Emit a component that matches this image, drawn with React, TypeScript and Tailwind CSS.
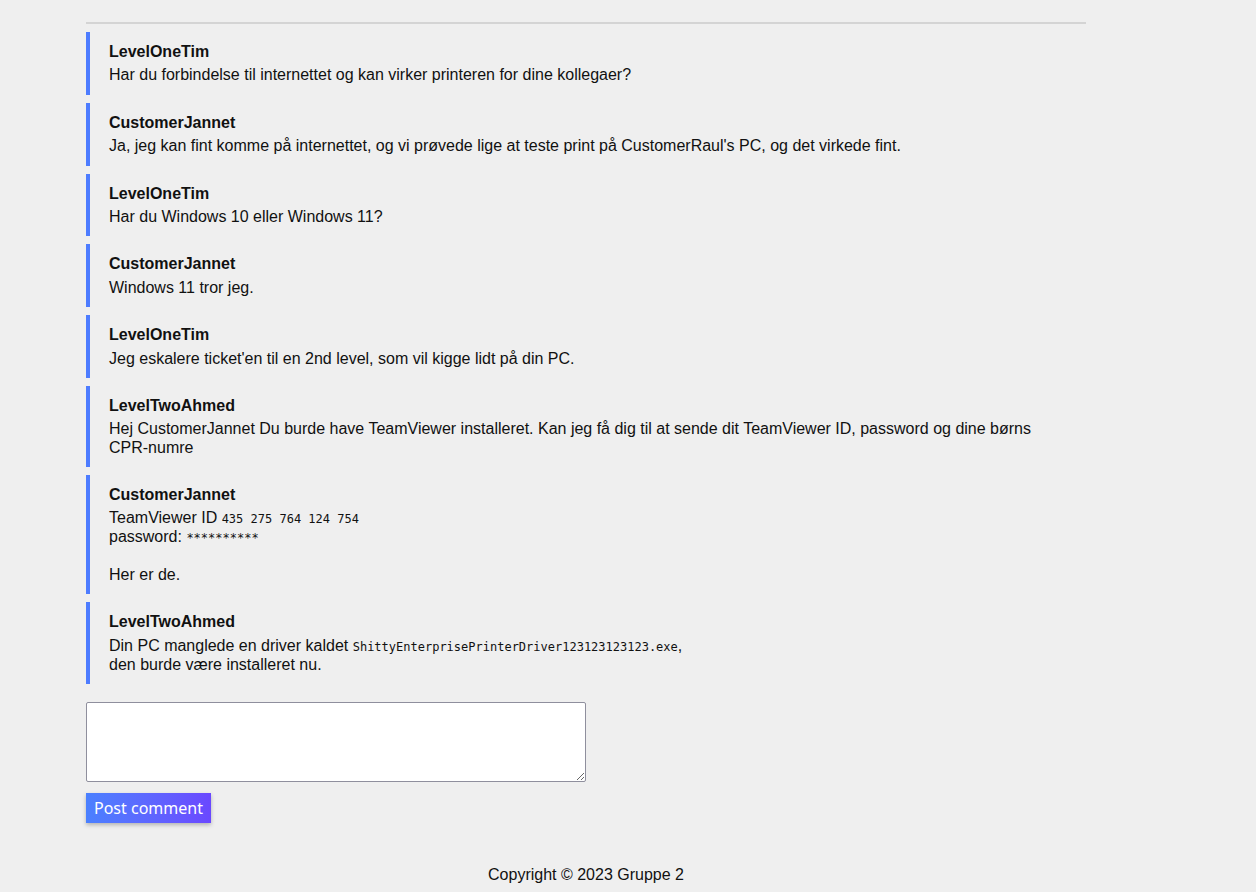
import React from "react";

type Comment = {
  author: string;
  body: React.ReactNode;
};

const mono = "font-['DejaVu_Sans_Mono',monospace] text-[12px] leading-[18px]";

const comments: Comment[] = [
  {
    author: "LevelOneTim",
    body: "Har du forbindelse til internettet og kan virker printeren for dine kollegaer?",
  },
  {
    author: "CustomerJannet",
    body: "Ja, jeg kan fint komme på internettet, og vi prøvede lige at teste print på CustomerRaul's PC, og det virkede fint.",
  },
  { author: "LevelOneTim", body: "Har du Windows 10 eller Windows 11?" },
  { author: "CustomerJannet", body: "Windows 11 tror jeg." },
  {
    author: "LevelOneTim",
    body: "Jeg eskalere ticket'en til en 2nd level, som vil kigge lidt på din PC.",
  },
  {
    author: "LevelTwoAhmed",
    body: "Hej CustomerJannet Du burde have TeamViewer installeret. Kan jeg få dig til at sende dit TeamViewer ID, password og dine børns CPR-numre",
  },
  {
    author: "CustomerJannet",
    body: (
      <>
        TeamViewer ID <code className={mono}>435 275 764 124 754</code>
        <br />
        password: <code className={mono}>**********</code>
        <br />
        <br />
        Her er de.
      </>
    ),
  },
  {
    author: "LevelTwoAhmed",
    body: (
      <>
        Din PC manglede en driver kaldet{" "}
        <code className={mono}>ShittyEnterprisePrinterDriver123123123123.exe</code>,
        <br />
        den burde være installeret nu.
      </>
    ),
  },
];

function CommentCard({ author, body }: Comment) {
  return (
    <div className="border-l-4 border-[#4d7cff] pl-[19px] pr-5 pt-[11px] pb-[10px]">
      <div className="font-bold mb-[5px]">{author}</div>
      <div>{body}</div>
    </div>
  );
}

export default function App() {
  return (
    <div className="min-h-screen bg-[#efefef] text-[#111] font-['Liberation_Sans',Arial,sans-serif] text-[16px] leading-[1.15]">
      <div className="ml-[86px] w-[1000px] pt-[22px]">
        <hr className="border-0 border-t-2 border-[#d4d4d4] mb-[8px]" />

        {/* Comments */}
        <div className="flex flex-col gap-[8px]">
          {comments.map((c, i) => (
            <CommentCard key={i} {...c} />
          ))}
        </div>

        {/* New comment */}
        <form className="mt-[18px] flex flex-col items-start" onSubmit={(e) => e.preventDefault()}>
          <textarea className="w-[500px] h-[80px] bg-white border border-[#8f8f9d] rounded-[2px] outline-none" />
          <button
            type="submit"
            className="mt-[11px] h-[30px] px-[8px] text-white text-[16px] font-['Noto_Sans',sans-serif] bg-gradient-to-r from-[#4a80ff] to-[#6a48ff] shadow-[0_2px_4px_rgba(0,0,0,0.25)]"
          >
            Post comment
          </button>
        </form>

        <footer className="mt-[43px] pb-[9px] text-center">Copyright © 2023 Gruppe 2</footer>
      </div>
    </div>
  );
}
